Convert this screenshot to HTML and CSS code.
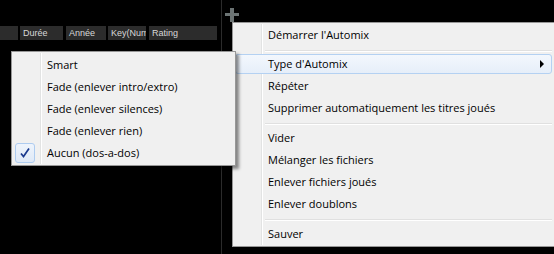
FILE: index.html
```html
<!DOCTYPE html>
<html>
<head>
    <title>Automix</title>
    <link rel="stylesheet" href="styles.css">
</head>
<body>
    <div class="screen">
        <div class="list-pane">
            <div class="col-header">
                <div class="col col-first"></div>
                <div class="col col-duree">Durée</div>
                <div class="col col-annee">Année</div>
                <div class="col col-key">Key(Numé</div>
                <div class="col col-rating">Rating</div>
            </div>
        </div>
        <div class="side-pane">
            <svg class="plus" width="14" height="14" viewBox="0 0 14 14">
                <rect x="5" y="0" width="4" height="14" fill="#6c7474"/>
                <rect x="0" y="5" width="14" height="3" fill="#6c7474"/>
            </svg>
        </div>

        <!-- main context menu -->
        <ul class="menu main-menu">
            <li class="item">Démarrer l'Automix</li>
            <li class="sep"></li>
            <li class="item hover">Type d'Automix<span class="arrow"></span></li>
            <li class="item">Répéter</li>
            <li class="item">Supprimer automatiquement les titres joués</li>
            <li class="sep"></li>
            <li class="item">Vider</li>
            <li class="item">Mélanger les fichiers</li>
            <li class="item">Enlever fichiers joués</li>
            <li class="item">Enlever doublons</li>
            <li class="sep"></li>
            <li class="item">Sauver</li>
        </ul>

        <!-- Type d'Automix submenu -->
        <ul class="menu sub-menu">
            <li class="item">Smart</li>
            <li class="item">Fade (enlever intro/extro)</li>
            <li class="item">Fade (enlever silences)</li>
            <li class="item">Fade (enlever rien)</li>
            <li class="item checked">
                <span class="check">
                    <svg width="12" height="12" viewBox="0 0 12 12">
                        <path d="M2 6.5 L4.5 9.5 L10 1.5" fill="none" stroke="#1a3a8f" stroke-width="1.7"/>
                    </svg>
                </span>
                Aucun (dos-a-dos)
            </li>
        </ul>
    </div>
</body>
</html>
```

FILE: styles.css
```css
body {
    margin: 0;
    background-color: #000;
    font-family: "Open Sans", "Noto Sans", sans-serif;
}

.screen {
    position: relative;
    display: flex;
    width: 554px;
    height: 254px;
    overflow: hidden;
}

.list-pane {
    width: 221px;
    border-right: 1px solid #2b2b2b;
    padding-top: 26px;
}

.col-header {
    display: flex;
    gap: 2px;
}

.col {
    height: 14px;
    background-color: #2c2c2c;
    color: #d8d8d8;
    font-family: "Liberation Sans", Arial, sans-serif;
    font-size: 9px;
    line-height: 14px;
    padding-left: 3px;
    box-sizing: border-box;
    white-space: nowrap;
    overflow: hidden;
}

.col-first { width: 18px; }
.col-duree { width: 43px; }
.col-annee { width: 40px; margin-left: 1px; }
.col-key { width: 38px; }
.col-rating { width: 68px; margin-left: 1px; }

.side-pane {
    flex: 1;
    padding: 8px 0 0 3px;
}

.plus {
    display: block;
}

/* menus */
.menu {
    position: absolute;
    list-style: none;
    margin: 0;
    background-color: #f0f0f0;
    border: 1px solid #979797;
    box-shadow: 3px 3px 3px rgba(0, 0, 0, 0.45);
    font-size: 11px;
    color: #000;
}

.menu::before {
    content: "";
    position: absolute;
    top: 1px;
    bottom: 1px;
    left: 28px;
    width: 1px;
    background-color: #e2e3e3;
    border-right: 1px solid #fff;
}

.main-menu {
    left: 232px;
    top: 22px;
    width: 317px;
    padding: 1px 2px;
}

.sub-menu {
    left: 11px;
    top: 51px;
    width: 219px;
    padding: 2px 2px 1px;
}

.item {
    position: relative;
    height: 22px;
    line-height: 22px;
    padding-left: 33px;
    white-space: nowrap;
}

.item.hover {
    height: 18px;
    line-height: 18px;
    margin: 1px 0;
    padding-left: 32px;
    border: 1px solid #b4d1f2;
    border-radius: 3px;
    background: linear-gradient(#f3f7fd, #e6eef9);
}

.arrow {
    position: absolute;
    right: 7px;
    top: 5px;
    width: 0;
    height: 0;
    border-top: 4px solid transparent;
    border-bottom: 4px solid transparent;
    border-left: 4px solid #000;
}

.sep {
    height: 1px;
    margin: 4px 0 2px 30px;
    background-color: #e0e0e0;
    border-bottom: 1px solid #fff;
}

.check {
    position: absolute;
    left: 1px;
    top: 1px;
    width: 20px;
    height: 20px;
    box-sizing: border-box;
    border: 1px solid #aeccf0;
    border-radius: 3px;
    background: linear-gradient(#eef4fc, #dfe9f7);
    display: flex;
    align-items: center;
    justify-content: center;
}
```
